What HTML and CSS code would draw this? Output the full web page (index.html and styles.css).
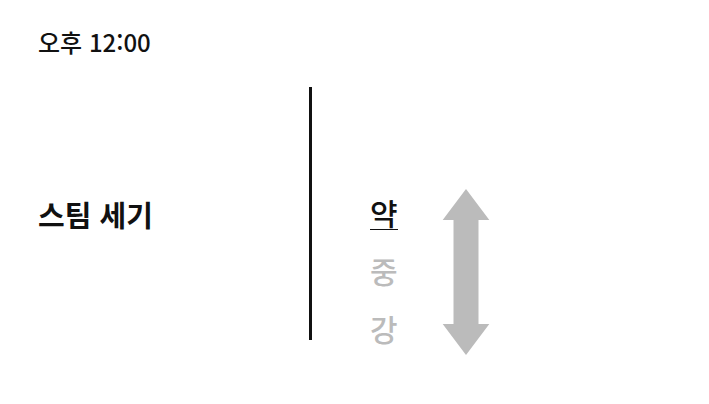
FILE: index.html
```html
<!DOCTYPE html>
<html lang="ko">
<head>
<meta charset="utf-8">
<meta name="viewport" content="width=device-width, initial-scale=1">
<title>스팀 세기</title>
<link rel="stylesheet" href="styles.css">
</head>
<body>
<header class="status"><time datetime="12:00">오후 12:00</time></header>
<main class="panel">
  <h1 class="title">스팀 세기</h1>
  <div class="divider"></div>
  <div class="settings">
    <ul class="levels">
      <li class="level selected">약</li>
      <li class="level">중</li>
      <li class="level">강</li>
    </ul>
    <svg class="arrow" width="48" height="168" viewBox="0 0 48 168" aria-hidden="true"><path d="M24 1 47.300 32H36.500V136H47.300L24 167 .7 136H11.500V32H.7Z"/></svg>
  </div>
</main>
</body>
</html>
```
FILE: styles.css
```css
* { box-sizing: border-box; }
body {
  margin: 0;
  background: #fff;
  color: #111;
  font-family: "Noto Sans CJK KR", sans-serif;
}
.status {
  padding: 24px 38px 0;
  font-size: 24px;
  line-height: 36px;
  font-weight: 500;
}
.panel {
  display: grid;
  grid-template-columns: 43.6% 3px 1fr;
  margin-top: 27px;
}
.title {
  margin: 0 0 16px;
  padding-left: 38px;
  align-self: center;
  font-size: 29px;
  line-height: 48px;
  font-weight: 700;
}
.divider {
  margin-bottom: 16px;
  background: #111;
}
.settings {
  display: flex;
  align-items: flex-end;
  gap: 44px;
  min-height: 269px;
  padding-left: 58px;
}
.levels {
  display: grid;
  gap: 20px;
  margin: 0;
  padding: 0 0 10px;
  list-style: none;
}
.level {
  height: 38px;
  border-bottom: 1px solid transparent;
  color: #bbb;
  font-size: 30px;
  line-height: 40px;
  font-weight: 500;
}
.selected {
  border-color: #111;
  color: #111;
}
.arrow { fill: #bbb; }
```
